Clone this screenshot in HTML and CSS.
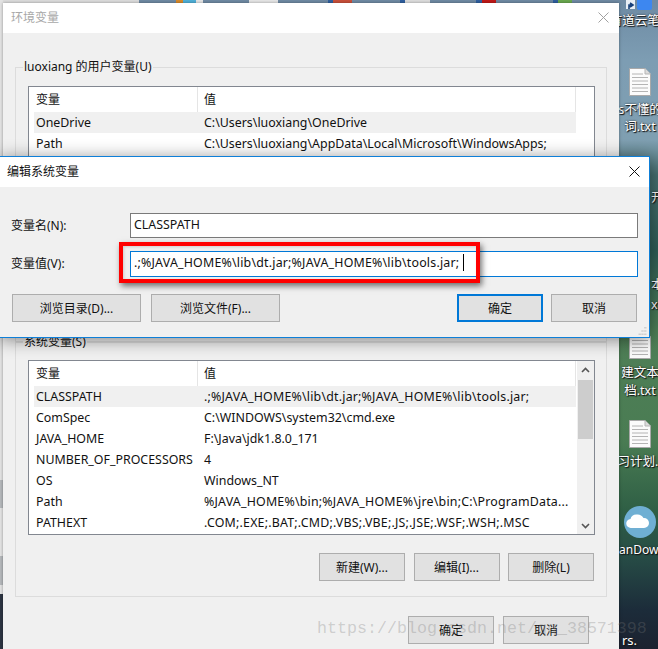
FILE: index.html
```html
<!DOCTYPE html>
<html lang="zh-CN">
<head>
<meta charset="utf-8">
<title>环境变量</title>
<link rel="stylesheet" href="styles.css">
</head>
<body>
<div class="desktop">
  <div class="desk-top"></div>
  <div class="desk-left"></div>

  <svg class="shortcut" viewBox="0 0 26 12"><rect x="0" y="0" width="9" height="9" fill="#e8eef5"/><path d="M3 9V5h3M4 3l3 2-3 2" fill="none" stroke="#17407a" stroke-width="1.6"/><rect x="11" y="-4" width="15" height="14" rx="2" fill="#3d87f0"/></svg>
  <div class="dlabel l1">有道云笔记</div>
  <svg class="doc d1" viewBox="0 0 22 28"><use href="#docshape"/></svg>
  <div class="dlabel l2">s不懂的</div>
  <div class="dlabel l3">词.txt</div>
  <div class="dlabel l4">开</div>
  <div class="dlabel l5">本</div>
  <div class="dlabel l6">x</div>
  <svg class="doc d2" viewBox="0 0 22 28"><use href="#docshape"/></svg>
  <div class="dlabel l7">建文本</div>
  <div class="dlabel l8">档.txt</div>
  <svg class="doc d3" viewBox="0 0 22 28"><use href="#docshape"/></svg>
  <div class="dlabel l9">习计划.</div>
  <svg class="cloud" viewBox="0 0 32 32"><circle cx="16" cy="16" r="16" fill="#6fafd3"/><path d="M7 22a4.500 4.500 0 0 1-.5-9 6 6 0 0 1 6-4.500 7 7 0 0 1 7 3.500 5 5 0 0 1 5.500 5 5 5 0 0 1-5 5z" fill="#fff"/></svg>
  <div class="dlabel l10">anDown</div>
  <div class="dlabel l11">rs.</div>

  <svg class="defs" width="0" height="0"><defs><g id="docshape"><path d="M.5.5H16L21.500 6V27.500H.5z" fill="#fbfbfb" stroke="#a9a9a9"/><path d="M16 .5V6h5.500" fill="#dcdcdc" stroke="#b5b5b5"/><path d="M3 6h11M3 9.500h16M3 13h16M3 16.500h16M3 20h16M3 23.500h16" stroke="#b4b4b4" fill="none"/></g></defs></svg>

  <section class="win back">
    <header class="titlebar">
      <span class="title-muted">环境变量</span>
      <svg class="close close-muted" viewBox="0 0 11 11"><path d="M.5.5l10 10M10.500.5l-10 10"/></svg>
    </header>
    <div class="back-body">
      <div class="group group-user">
        <span class="legend">luoxiang 的用户变量(U)</span>
        <div class="list">
          <div class="row head"><span class="c1">变量</span><span class="c2">值</span></div>
          <div class="row sel"><span class="c1">OneDrive</span><span class="c2">C:\Users\luoxiang\OneDrive</span></div>
          <div class="row"><span class="c1">Path</span><span class="c2">C:\Users\luoxiang\AppData\Local\Microsoft\WindowsApps;</span></div>
        </div>
      </div>
      <div class="group group-sys">
        <span class="legend">系统变量(S)</span>
        <div class="list list-sys">
          <div class="row head"><span class="c1">变量</span><span class="c2">值</span></div>
          <div class="row sel"><span class="c1">CLASSPATH</span><span class="c2 wide">.;%JAVA_HOME%\lib\dt.jar;%JAVA_HOME%\lib\tools.jar;</span></div>
          <div class="row"><span class="c1">ComSpec</span><span class="c2">C:\WINDOWS\system32\cmd.exe</span></div>
          <div class="row"><span class="c1">JAVA_HOME</span><span class="c2">F:\Java\jdk1.8.0_171</span></div>
          <div class="row"><span class="c1">NUMBER_OF_PROCESSORS</span><span class="c2">4</span></div>
          <div class="row"><span class="c1">OS</span><span class="c2">Windows_NT</span></div>
          <div class="row"><span class="c1">Path</span><span class="c2 wide">%JAVA_HOME%\bin;%JAVA_HOME%\jre\bin;C:\ProgramData...</span></div>
          <div class="row"><span class="c1">PATHEXT</span><span class="c2 wide">.COM;.EXE;.BAT;.CMD;.VBS;.VBE;.JS;.JSE;.WSF;.WSH;.MSC</span></div>
          <div class="scrollbar">
            <svg class="chev" viewBox="0 0 9 6"><path d="M1 5l3.500-3.500L8 5"/></svg>
            <div class="thumb"></div>
            <svg class="chev chev-down" viewBox="0 0 9 6"><path d="M1 1l3.500 3.500L8 1"/></svg>
          </div>
        </div>
        <div class="btnrow group-btns">
          <button class="btn">新建(W)...</button>
          <button class="btn">编辑(I)...</button>
          <button class="btn">删除(L)</button>
        </div>
      </div>
      <div class="btnrow win-btns">
        <button class="btn">确定</button>
        <button class="btn">取消</button>
      </div>
    </div>
  </section>

  <section class="win front">
    <header class="titlebar">
      <span>编辑系统变量</span>
      <svg class="close" viewBox="0 0 11 11"><path d="M.5.5l10 10M10.500.5l-10 10"/></svg>
    </header>
    <div class="front-body">
      <div class="field">
        <label class="flabel">变量名(N):</label>
        <div class="input">CLASSPATH</div>
      </div>
      <div class="field field-val">
        <label class="flabel">变量值(V):</label>
        <div class="input input-focus wide">.;%JAVA_HOME%\lib\dt.jar;%JAVA_HOME%\lib\tools.jar;<span class="caret"></span></div>
      </div>
      <div class="front-btns">
        <button class="btn btn-wide">浏览目录(D)...</button>
        <button class="btn btn-wide">浏览文件(F)...</button>
        <span class="spacer"></span>
        <button class="btn btn-default">确定</button>
        <button class="btn">取消</button>
      </div>
    </div>
    <div class="redbox"></div>
    <svg class="grip" viewBox="0 0 10 10"><path d="M7 0h3v2H7zM3.500 4h3v2h-3zM7 4h3v2H7zM0 8h3v2H0zM3.500 8h3v2h-3zM7 8h3v2H7z"/></svg>
  </section>

  <div class="watermark">https://blog.csdn.net/qq_38571398</div>
</div>
</body>
</html>
```
FILE: styles.css
```css
* { box-sizing: border-box; }
html, body { margin: 0; padding: 0; }
body {
  width: 658px;
  height: 649px;
  overflow: hidden;
  font-family: "Noto Sans", "Noto Sans CJK SC", sans-serif;
  font-size: 12px;
  color: #111;
}
.desktop {
  position: relative;
  width: 658px;
  height: 649px;
  overflow: hidden;
  background: linear-gradient(180deg, #6d8aa3 0, #7d9db3 60px, #7f9fb1 140px, #476f6f 175px, #2f5d56 250px, #4f7f57 330px, #4a7c53 440px, #2f5f45 510px, #264a45 560px, #1c2c3a 610px, #1c2230 649px);
}
.desk-top {
  position: absolute;
  left: 0; top: 0; right: 0;
  height: 3px;
  background: linear-gradient(90deg, #dcdcdc 0 139px, #6f8aa3 139px 176px, #d88a2a 176px 183px, #4fb0d8 183px 196px, #e6e6e6 196px 203px, #6f8aa3 203px 249px, #e6e6e6 249px 278px, #6f8aa3 278px 328px, #2f5f9f 328px 333px, #c9503a 333px 352px, #6f8aa3 352px 400px, #2f5f9f 400px 405px, #ddd 405px 430px, #6f8aa3 430px 476px, #2f5f9f 476px 482px, #c01818 482px 496px, #6f8aa3 496px 553px, #2f5f9f 553px 558px, #6aa84f 558px 572px, #6f8aa3 572px 658px);
}
.desk-left {
  position: absolute;
  left: 0; top: 0; bottom: 0;
  width: 3px;
  background: linear-gradient(180deg, #e3e3e3 0 480px, #b5b8bb 480px 508px, #e3e3e3 508px 556px, #b5b8bb 556px 585px, #e3e3e3 585px 594px, #2c3442 594px 649px);
}
.defs { position: absolute; }
.shortcut { position: absolute; left: 626px; top: 0; width: 26px; height: 12px; }
.doc { position: absolute; left: 629px; width: 22px; height: 28px; }
.d1 { top: 68px; }
.d2 { top: 331px; }
.d3 { top: 420px; }
.cloud { position: absolute; left: 624px; top: 506px; width: 32px; height: 32px; }
.dlabel {
  position: absolute;
  left: 600px;
  width: 80px;
  text-align: center;
  color: #fff;
  font-size: 12.500px;
  line-height: 18px;
  white-space: nowrap;
  text-shadow: 1px 1px 1px #111, 0 0 2px #222;
}
.l1 { top: 12px; left: 601px; }
.l2 { top: 101px; }
.l3 { top: 118px; }
.l4 { top: 189px; left: 651px; width: 14px; text-align: left; }
.l5 { top: 276px; left: 651px; width: 14px; text-align: left; }
.l6 { top: 296px; left: 651px; width: 14px; text-align: left; }
.l7 { top: 364px; }
.l8 { top: 382px; }
.l9 { top: 453px; left: 598px; }
.l10 { top: 541px; left: 619px; width: 45px; text-align: left; font-size: 12px; }
.l11 { top: 631px; left: 622px; width: 30px; text-align: left; font-size: 13px; }

/* Windows */
.win { position: absolute; background: #f0f0f0; }
.back { left: 3px; top: 3px; width: 616px; height: 646px; box-shadow: 0 0 3px rgba(0, 0, 0, .35); }
.front {
  left: -1px; top: 156px; width: 651px; height: 182px;
  border: 1px solid #0e7fd8;
  box-shadow: 0 2px 16px rgba(0, 0, 0, .45);
}
.titlebar {
  display: flex;
  align-items: center;
  justify-content: space-between;
  height: 30px;
  background: #fff;
  padding: 0 9px 2px 7px;
}
.title-muted { color: #a8a8a8; }
.back .titlebar { padding-left: 8px; padding-right: 10px; }
.close { width: 11px; height: 11px; fill: none; stroke: #111; stroke-width: 1; }
.close-muted { stroke: #a0a0a0; }

/* Back window */
.back-body { padding: 34px 12px 0; }
.group { position: relative; border: 1px solid #dcdcdc; }
.group-user { height: 275px; padding: 18px 11px 0 12px; }
.group-sys { height: 255px; padding: 17px 11px 0 12px; margin-bottom: 19px; }
.legend {
  position: absolute;
  left: 7px;
  top: -9px;
  padding: 0 1px;
  line-height: 16px;
  background: #f0f0f0;
}
.list {
  position: relative;
  height: 220px;
  background: #fff;
  border: 1px solid #828790;
  padding-left: 5px;
  padding-right: 18px;
  font-size: 12.400px;
}
.list-sys { height: 175px; }
.row { display: flex; height: 21px; line-height: 21px; white-space: nowrap; }
.row.head { height: 25px; line-height: 26px; font-size: 12px; }
.row.sel { background: #f0f0f0; }
.c1 { width: 163px; padding-left: 2px; flex: none; overflow: hidden; }
.c2 { flex: 1; padding-left: 7px; overflow: hidden; }
.wide { letter-spacing: .2px; }
.head .c2 { border-left: 1px solid #e5e5e5; padding-left: 6px; }
.head { border-right: 1px solid #e5e5e5; }
.scrollbar {
  position: absolute;
  right: 0; top: 0; bottom: 0;
  width: 17px;
  background: #f0f0f0;
  padding-top: 6px;
  display: flex;
  flex-direction: column;
  align-items: center;
}
.thumb { width: 15px; height: 59px; margin-top: 7px; background: #cdcdcd; }
.chev { width: 9px; height: 6px; fill: none; stroke: #555; stroke-width: 1.600; flex: none; }
.chev-down { margin-top: auto; margin-bottom: 5px; }

/* Buttons */
.btn {
  height: 28px;
  width: 86px;
  padding: 0;
  flex: none;
  font: inherit;
  color: #111;
  background: #e1e1e1;
  border: 1px solid #adadad;
  border-radius: 0;
}
.btnrow { display: flex; }
.group-btns { justify-content: flex-end; gap: 8.500px; margin-top: 18px; padding-right: 1px; }
.win-btns { justify-content: flex-end; gap: 9px; padding-right: 18px; }

/* Front dialog */
.front-body { padding: 26px 11px 0 11px; }
.field { display: flex; align-items: center; height: 25px; }
.field-val { margin-top: 13px; height: 26px; }
.flabel { width: 119px; flex: none; padding-bottom: 2px; }
.input {
  width: 508px;
  height: 100%;
  border: 1px solid #7a7a7a;
  background: #fff;
  padding-left: 3px;
  line-height: 22px;
  white-space: nowrap;
  font-size: 12.400px;
}
.input-focus { border-color: #0078d7; }
.caret {
  display: inline-block;
  width: 1px;
  height: 17px;
  margin-left: 4px;
  background: #000;
  vertical-align: -4px;
}
.front-btns { display: flex; margin-top: 17px; gap: 10px; padding: 0 1px; }
.btn-wide { width: 129px; }
.spacer { flex: 1; }
.btn-default { border: 2px solid #0078d7; margin-right: -2px; }
.redbox {
  position: absolute;
  left: 119px;
  top: 85px;
  width: 361px;
  height: 41px;
  border: 4px solid #f00;
  box-shadow: 2px 3px 6px rgba(0, 0, 0, .55), inset 1px 1px 3px rgba(0, 0, 0, .15);
}
.grip { position: absolute; right: 2px; bottom: 2px; width: 9px; height: 8px; fill: #d0d0d0; }

.watermark {
  position: absolute;
  left: 317px;
  top: 619px;
  font-family: "Liberation Mono", monospace;
  font-size: 16.670px;
  line-height: 20px;
  white-space: nowrap;
  color: rgba(120, 120, 120, .3);
}
```
